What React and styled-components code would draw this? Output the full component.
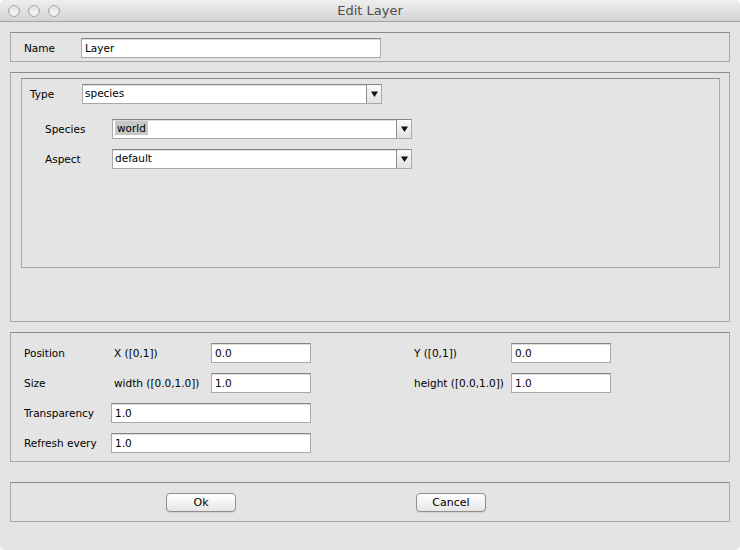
import React from "react";
import styled, { createGlobalStyle } from "styled-components";

const GlobalStyle = createGlobalStyle`
  html, body { margin: 0; padding: 0; background: #ffffff; }
  body {
    font-family: "DejaVu Sans", "Liberation Sans", sans-serif;
    font-size: 10.5px;
    color: #000;
  }
  * { box-sizing: border-box; }
`;

const Window = styled.div`
  width: 740px;
  height: 550px;
  background: #e4e4e4;
  border-radius: 5px;
  overflow: hidden;
  display: flex;
  flex-direction: column;
`;

const TitleBar = styled.div`
  flex: none;
  height: 22px;
  display: grid;
  grid-template-columns: 1fr auto 1fr;
  align-items: center;
  background: linear-gradient(#efefef, #d4d4d4);
  border-bottom: 1px solid #a3a3a3;
`;

const Lights = styled.div`
  display: flex;
  gap: 8px;
  padding-left: 8px;
`;

const Light = styled.span`
  width: 12px;
  height: 12px;
  border-radius: 50%;
  border: 1px solid #a6a6a6;
  background: radial-gradient(circle at 50% 70%, #f8f8f8, #dadada);
`;

const Title = styled.div`
  font-size: 13px;
  color: #4d4d4d;
  padding-bottom: 1px;
`;

const Body = styled.div`
  flex: 1;
  display: flex;
  flex-direction: column;
  padding: 10px 10px 0;
`;

const Panel = styled.div`
  flex: none;
  border: 1px solid #a9a9a9;
  border-top-color: #8a8a8a;
  margin-bottom: ${(p) => p.$gap || 0}px;
  height: ${(p) => (p.$h ? `${p.$h}px` : "auto")};
  padding: ${(p) => p.$pad || "0"};
`;

const Row = styled.div`
  display: flex;
  align-items: center;
  height: 20px;
  margin-top: ${(p) => p.$top || 0}px;
`;

const Label = styled.div`
  flex: none;
  width: ${(p) => (p.$w ? `${p.$w}px` : "auto")};
  white-space: nowrap;
`;

const Group = styled.div`
  padding-left: ${(p) => p.$indent || 0}px;
`;

const TextField = styled.input`
  display: block;
  width: ${(p) => p.$w}px;
  height: 20px;
  margin: 0;
  padding: 0 0 1px 3px;
  border: 1px solid #a9a9a9;
  border-top-color: #858585;
  box-shadow: inset 0 1px 0 #dcdcdc;
  background: #fff;
  font: inherit;
  color: #000;
  outline: none;
  grid-column: ${(p) => p.$col || "auto"};
`;

const Combo = styled.div`
  display: flex;
  width: 300px;
  height: 20px;
  border: 1px solid #a9a9a9;
  border-top-color: #858585;
  background: #fff;
  box-shadow: inset 0 1px 0 #dcdcdc;
`;

const ComboText = styled.div`
  flex: 1;
  display: flex;
  align-items: center;
  padding: 0 0 3px 2px;
`;

const Highlight = styled.span`
  background: #c8c8c8;
  padding: 0 2px;
  line-height: 14px;
`;

const ComboArrow = styled.div`
  flex: none;
  width: 15px;
  display: flex;
  align-items: center;
  justify-content: center;
  border-left: 1px solid #8d8d8d;
  background: linear-gradient(#fafafa, #e2e2e2);
`;

const Arrow = () => (
  <svg width="7" height="6" viewBox="0 0 7 6">
    <path d="M0 0.5 H7 L3.5 6 Z" fill="#111" />
  </svg>
);

const Select = ({ value, selected }) => (
  <Combo>
    <ComboText>{selected ? <Highlight>{value}</Highlight> : value}</ComboText>
    <ComboArrow>
      <Arrow />
    </ComboArrow>
  </Combo>
);

const FormGrid = styled.div`
  display: grid;
  grid-template-columns: 87px 100px 100px 103px 97px 100px;
  grid-auto-rows: 20px;
  row-gap: 10px;
  align-items: center;
`;

const SubLabel = styled.div`
  padding-left: ${(p) => p.$indent || 0}px;
  white-space: nowrap;
  grid-column: ${(p) => p.$col || "auto"};
`;

const ButtonBar = styled.div`
  display: flex;
  gap: 180px;
`;

const Button = styled.button`
  width: 70px;
  height: 19px;
  margin: 0;
  padding: 0 0 1px;
  border: 1px solid #8e8e8e;
  border-radius: 4px;
  background: linear-gradient(#ffffff, #f3f3f3 50%, #e6e6e6);
  box-shadow: 0 1px 0 rgba(0, 0, 0, 0.08);
  font: inherit;
  font-size: 11px;
  color: #000;
`;

export default function App() {
  return (
    <>
      <GlobalStyle />
      <Window>
        <TitleBar>
          <Lights>
            <Light />
            <Light />
            <Light />
          </Lights>
          <Title>Edit Layer</Title>
          <div />
        </TitleBar>
        <Body>
          <Panel $gap={10} $pad="5px 0 3px 13px">
            <Row>
              <Label $w={57}>Name</Label>
              <TextField $w={300} defaultValue="Layer" />
            </Row>
          </Panel>

          <Panel $gap={10} $h={250} $pad="5px 9px 0 10px">
            <Panel $h={190} $pad="5px 0 0 8px">
              <Row>
                <Label $w={52}>Type</Label>
                <Select value="species" />
              </Row>
              <Group $indent={15}>
                <Row $top={15}>
                  <Label $w={67}>Species</Label>
                  <Select value="world" selected />
                </Row>
                <Row $top={10}>
                  <Label $w={67}>Aspect</Label>
                  <Select value="default" />
                </Row>
              </Group>
            </Panel>
          </Panel>

          <Panel $gap={20} $pad="10px 0 8px 13px">
            <FormGrid>
              <SubLabel $col="1">Position</SubLabel>
              <SubLabel $indent={3}>X ([0,1])</SubLabel>
              <TextField $w={100} defaultValue="0.0" />
              <SubLabel $col="5">Y ([0,1])</SubLabel>
              <TextField $w={100} defaultValue="0.0" />

              <SubLabel $col="1">Size</SubLabel>
              <SubLabel $indent={3}>width ([0.0,1.0])</SubLabel>
              <TextField $w={100} defaultValue="1.0" />
              <SubLabel $col="5">height ([0.0,1.0])</SubLabel>
              <TextField $w={100} defaultValue="1.0" />

              <SubLabel $col="1">Transparency</SubLabel>
              <TextField $w={200} $col="2 / span 2" defaultValue="1.0" />

              <SubLabel $col="1">Refresh every</SubLabel>
              <TextField $w={200} $col="2 / span 2" defaultValue="1.0" />
            </FormGrid>
          </Panel>

          <Panel $pad="10px 0 9px 155px">
            <ButtonBar>
              <Button>Ok</Button>
              <Button>Cancel</Button>
            </ButtonBar>
          </Panel>
        </Body>
      </Window>
    </>
  );
}
